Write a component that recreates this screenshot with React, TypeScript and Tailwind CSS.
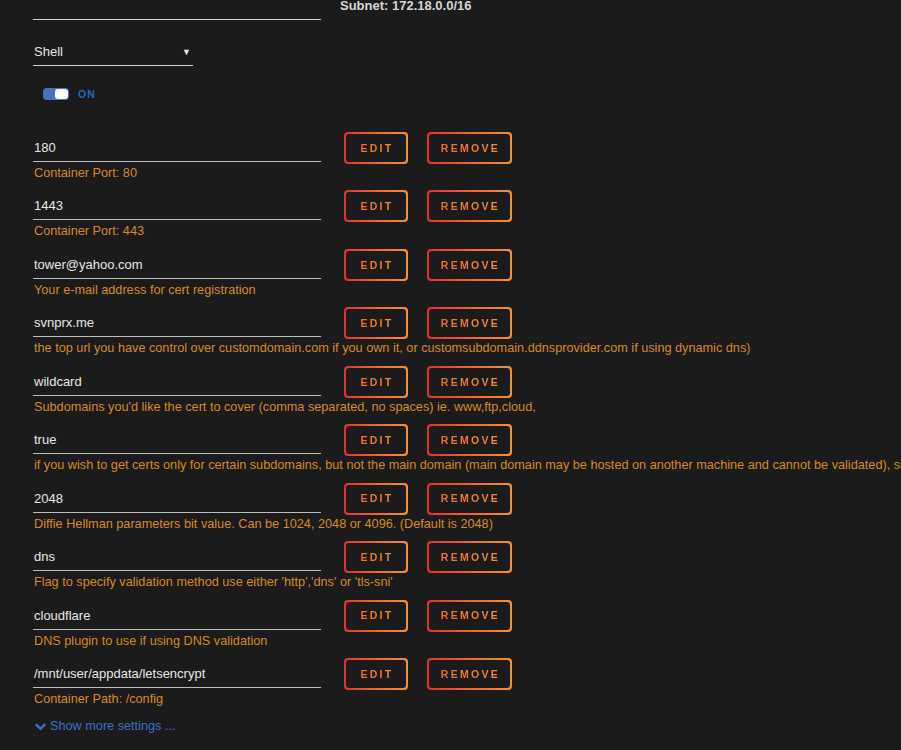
import React from "react";

const rows: { value: string; desc: string }[] = [
  { value: "180", desc: "Container Port: 80" },
  { value: "1443", desc: "Container Port: 443" },
  { value: "tower@yahoo.com", desc: "Your e-mail address for cert registration" },
  {
    value: "svnprx.me",
    desc: "the top url you have control over customdomain.com if you own it, or customsubdomain.ddnsprovider.com if using dynamic dns)",
  },
  {
    value: "wildcard",
    desc: "Subdomains you'd like the cert to cover (comma separated, no spaces) ie. www,ftp,cloud,",
  },
  {
    value: "true",
    desc: "if you wish to get certs only for certain subdomains, but not the main domain (main domain may be hosted on another machine and cannot be validated), set this to true",
  },
  {
    value: "2048",
    desc: "Diffie Hellman parameters bit value. Can be 1024, 2048 or 4096. (Default is 2048)",
  },
  { value: "dns", desc: "Flag to specify validation method use either 'http','dns' or 'tls-sni'" },
  { value: "cloudflare", desc: "DNS plugin to use if using DNS validation" },
  { value: "/mnt/user/appdata/letsencrypt", desc: "Container Path: /config" },
];

function GradButton({ label, width }: { label: string; width: string }) {
  return (
    <div
      className={`${width} h-[32px] rounded-[4px] p-[2px] bg-gradient-to-r from-[#e22d2d] to-[#f7912f]`}
    >
      <div className="w-full h-full rounded-[3px] bg-[#1b1b1b] flex items-center justify-center">
        <span className="text-[10.5px] font-bold tracking-[2.3px] pl-[2px] leading-none bg-gradient-to-r from-[#f06a2a] to-[#f7912f] bg-clip-text text-transparent">
          {label}
        </span>
      </div>
    </div>
  );
}

export default function App() {
  return (
    <div
      className="w-full min-h-[750px] h-[750px] overflow-hidden bg-[#1b1b1b]"
      style={{ fontFamily: '"Liberation Sans", Arial, sans-serif' }}
    >
      <div className="pl-[33px] flex flex-col">
        {/* top line + subnet */}
        <div className="flex items-start">
          <div className="w-[288px] h-[20px] border-b border-[#cfcfcf]" />
          <div className="ml-[19px] -mt-[2px] text-[13px] leading-[16px] font-bold text-[#d6d6d6]">
            Subnet: 172.18.0.0/16
          </div>
        </div>

        {/* select */}
        <div className="mt-[24px] w-[160px] border-b border-[#cfcfcf] pb-[5px] flex items-center justify-between">
          <span className="pl-[1px] text-[13px] leading-[16px] text-[#e6e6e6]">Shell</span>
          <span className="text-[9px] leading-[16px] text-[#e6e6e6] pr-[2px]">▼</span>
        </div>

        {/* toggle */}
        <div className="mt-[22px] ml-[10px] h-[12px] flex items-center">
          <div className="w-[26px] h-[12px] rounded-[4px] bg-[#4a6fc0] flex justify-end p-[1px]">
            <div className="w-[13px] h-[10px] rounded-[3px] bg-white" />
          </div>
          <span className="ml-[9px] text-[10.5px] leading-[12px] font-bold tracking-[1px] text-[#1d6db5]">ON</span>
        </div>

        {/* rows */}
        <div className="mt-[32px] flex flex-col">
          {rows.map((r, i) => (
            <div key={i} className="h-[58.45px] flex items-start">
              <div className="w-[288px] shrink-0">
                <div className="pt-[8px] pb-[5px] border-b border-[#bdbdbd]">
                  <div className="pl-[1px] text-[13px] leading-[16px] text-[#e8e8e8]">{r.value}</div>
                </div>
                <div className="mt-[3px] pl-[1px] text-[12.7px] leading-[16px] text-[#d88a1e] whitespace-nowrap">
                  {r.desc}
                </div>
              </div>
              <div className="ml-[23px] flex gap-[19px]">
                <GradButton label="EDIT" width="w-[64px]" />
                <GradButton label="REMOVE" width="w-[85px]" />
              </div>
            </div>
          ))}
        </div>

        {/* show more */}
        <div className="mt-[2px] flex items-center text-[#3b70c8]">
          <svg width="13" height="13" viewBox="0 0 14 14" className="ml-[1px]">
            <path d="M2 4.5 L7 9.5 L12 4.5" fill="none" stroke="#3b70c8" strokeWidth="2.6" />
          </svg>
          <span className="ml-[3px] text-[12.7px] leading-[16px]">Show more settings ...</span>
        </div>
      </div>
    </div>
  );
}
